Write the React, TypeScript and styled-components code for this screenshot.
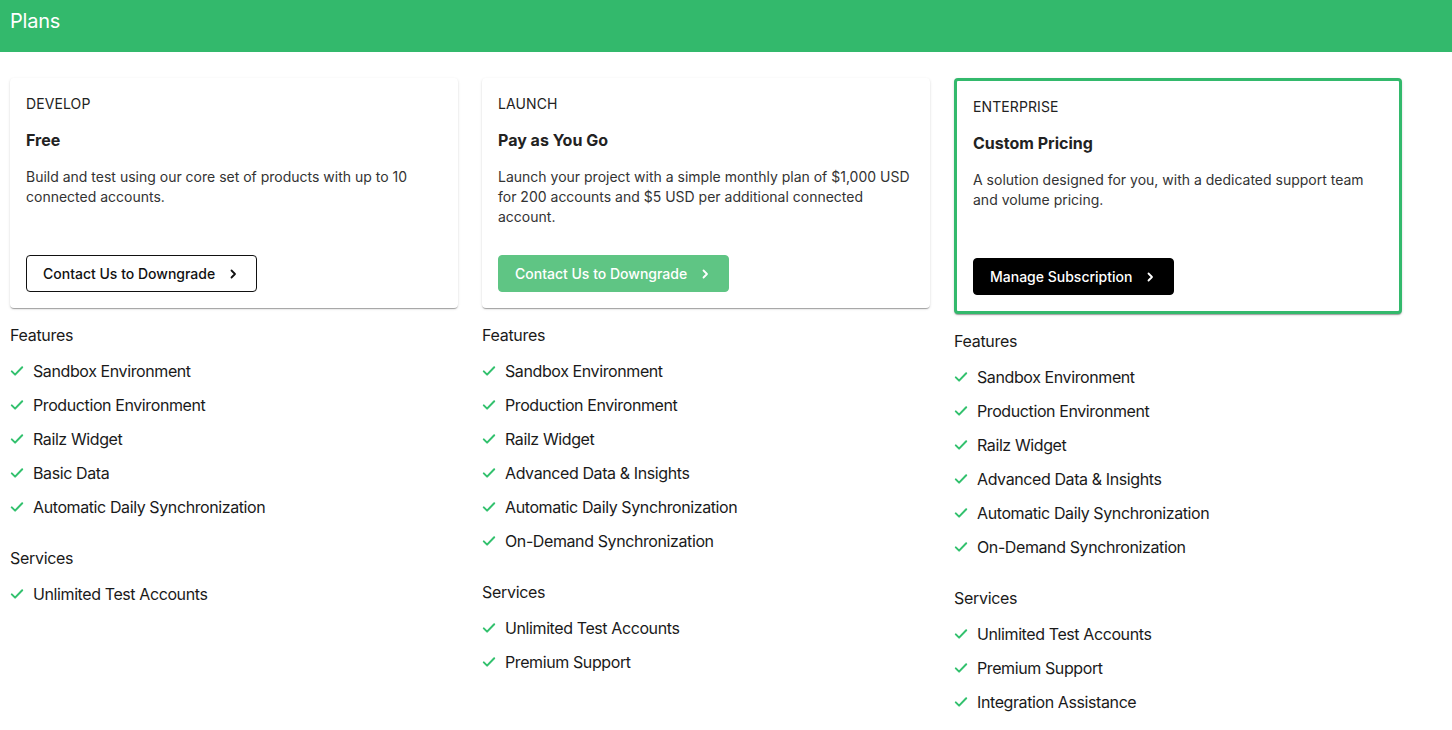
import React from "react";
import styled, { createGlobalStyle, css } from "styled-components";

const GlobalStyle = createGlobalStyle`
  html, body { margin: 0; padding: 0; background: #ffffff; }
  body { font-family: Inter, "Noto Sans", sans-serif; color: #1a1a1a; -webkit-font-smoothing: antialiased; }
  * { box-sizing: border-box; }
`;

const Header = styled.header`
  height: 52px;
  background: #33b96c;
  padding: 8px 10px;
`;

const HeaderTitle = styled.h1`
  margin: 0;
  font-size: 20px;
  line-height: 26px;
  font-weight: 400;
  color: #ffffff;
  letter-spacing: -0.2px;
`;

const Plans = styled.main`
  display: grid;
  grid-template-columns: repeat(3, 448px);
  column-gap: 24px;
  align-items: start;
  padding: 26px 10px 20px;
`;

const Column = styled.section`
  display: flex;
  flex-direction: column;
`;

const Card = styled.div<{ $highlighted?: boolean }>`
  background: #fff;
  border-radius: 4px;
  padding: 16px;
  box-shadow: 0 2px 1px -1px rgba(0, 0, 0, 0.2), 0 1px 1px 0 rgba(0, 0, 0, 0.14),
    0 1px 3px 0 rgba(0, 0, 0, 0.12);
  ${(p) =>
    p.$highlighted &&
    css`
      border: 3px solid #33b96c;
    `}
`;

const CardBody = styled.div`
  display: flex;
  flex-direction: column;
  min-height: 198px;
`;

const Tier = styled.div`
  font-size: 14px;
  line-height: 20px;
  color: #222;
  text-transform: uppercase;
  letter-spacing: 0.1px;
`;

const Price = styled.div`
  margin-top: 14px;
  font-size: 16px;
  line-height: 24px;
  font-weight: 700;
  color: #222;
`;

const Description = styled.p`
  margin: 15px 0 0;
  font-size: 14px;
  line-height: 20px;
  color: #333;
`;

const Button = styled.button<{ $variant: "outline" | "green" | "dark" }>`
  margin-top: auto;
  align-self: flex-start;
  display: inline-flex;
  align-items: center;
  gap: 13px;
  height: 37px;
  padding: 0 18px 0 16px;
  border-radius: 4px;
  font-family: Inter, "Noto Sans", sans-serif;
  font-size: 14px;
  font-weight: 500;
  cursor: pointer;
  ${(p) =>
    p.$variant === "outline"
      ? css`
          background: #fff;
          color: #111;
          border: 1px solid #111;
        `
      : p.$variant === "green"
      ? css`
          background: #5fc584;
          color: #fff;
          border: 1px solid #5fc584;
        `
      : css`
          background: #000;
          color: #fff;
          border: 1px solid #000;
        `}
`;

const Group = styled.div`
  display: flex;
  flex-direction: column;
  margin-top: 15px;
  & + & {
    margin-top: 27px;
  }
`;

const GroupTitle = styled.div`
  font-size: 16px;
  line-height: 24px;
  color: #1a1a1a;
  letter-spacing: -0.3px;
  margin-bottom: 12px;
`;

const List = styled.ul`
  list-style: none;
  margin: 0;
  padding: 0;
  display: flex;
  flex-direction: column;
  gap: 10px;
`;

const Item = styled.li`
  display: flex;
  align-items: center;
  gap: 9px;
  font-size: 16px;
  line-height: 24px;
  letter-spacing: -0.4px;
  color: #1a1a1a;
`;

const Chevron = () => (
  <svg width="10" height="10" viewBox="0 0 10 10" fill="none">
    <path d="M3.5 1.5 L7 5 L3.5 8.5" stroke="currentColor" strokeWidth="1.8" strokeLinecap="round" strokeLinejoin="round" />
  </svg>
);

const Check = () => (
  <svg width="14" height="14" viewBox="0 0 14 14" fill="none">
    <path d="M1.8 7.4 L5.1 10.6 L12.2 3.2" stroke="#33c16e" strokeWidth="2" strokeLinecap="round" strokeLinejoin="round" />
  </svg>
);

type Plan = {
  tier: string;
  price: string;
  description: string;
  button: string;
  variant: "outline" | "green" | "dark";
  highlighted?: boolean;
  features: string[];
  services: string[];
};

const plans: Plan[] = [
  {
    tier: "Develop",
    price: "Free",
    description: "Build and test using our core set of products with up to 10 connected accounts.",
    button: "Contact Us to Downgrade",
    variant: "outline",
    features: [
      "Sandbox Environment",
      "Production Environment",
      "Railz Widget",
      "Basic Data",
      "Automatic Daily Synchronization",
    ],
    services: ["Unlimited Test Accounts"],
  },
  {
    tier: "Launch",
    price: "Pay as You Go",
    description:
      "Launch your project with a simple monthly plan of $1,000 USD for 200 accounts and $5 USD per additional connected account.",
    button: "Contact Us to Downgrade",
    variant: "green",
    features: [
      "Sandbox Environment",
      "Production Environment",
      "Railz Widget",
      "Advanced Data & Insights",
      "Automatic Daily Synchronization",
      "On-Demand Synchronization",
    ],
    services: ["Unlimited Test Accounts", "Premium Support"],
  },
  {
    tier: "Enterprise",
    price: "Custom Pricing",
    description: "A solution designed for you, with a dedicated support team and volume pricing.",
    button: "Manage Subscription",
    variant: "dark",
    highlighted: true,
    features: [
      "Sandbox Environment",
      "Production Environment",
      "Railz Widget",
      "Advanced Data & Insights",
      "Automatic Daily Synchronization",
      "On-Demand Synchronization",
    ],
    services: ["Unlimited Test Accounts", "Premium Support", "Integration Assistance"],
  },
];

export default function App() {
  return (
    <>
      <GlobalStyle />
      <Header>
        <HeaderTitle>Plans</HeaderTitle>
      </Header>
      <Plans>
        {plans.map((plan) => (
          <Column key={plan.tier}>
            <Card $highlighted={plan.highlighted}>
              <CardBody>
                <Tier>{plan.tier}</Tier>
                <Price>{plan.price}</Price>
                <Description>{plan.description}</Description>
                <Button $variant={plan.variant}>
                  {plan.button}
                  <Chevron />
                </Button>
              </CardBody>
            </Card>
            <Group>
              <GroupTitle>Features</GroupTitle>
              <List>
                {plan.features.map((f) => (
                  <Item key={f}>
                    <Check />
                    {f}
                  </Item>
                ))}
              </List>
            </Group>
            <Group>
              <GroupTitle>Services</GroupTitle>
              <List>
                {plan.services.map((s) => (
                  <Item key={s}>
                    <Check />
                    {s}
                  </Item>
                ))}
              </List>
            </Group>
          </Column>
        ))}
      </Plans>
    </>
  );
}
